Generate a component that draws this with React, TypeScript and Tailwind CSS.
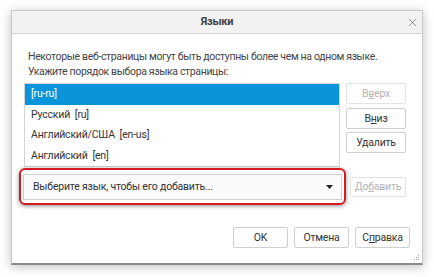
import { X } from 'lucide-react'

const rows = [
  { label: '[ru-ru]', selected: true },
  { label: 'Русский  [ru]', selected: false },
  { label: 'Английский/США  [en-us]', selected: false },
  { label: 'Английский  [en]', selected: false },
]

function Btn({ children, disabled, className = '' }: { children: React.ReactNode; disabled?: boolean; className?: string }) {
  return (
    <button
      className={`flex items-center justify-center border rounded-[2px] bg-white text-[10.5px] whitespace-nowrap ${
        disabled ? 'border-[#e3e3e3] text-[#b4b4b4]' : 'border-[#cfcfcf] text-[#333]'
      } ${className}`}
    >
      {children}
    </button>
  )
}

export default function App() {
  return (
    <div className="w-[434px] h-[277px] bg-white pt-[10px] pl-[11px] font-['Roboto',sans-serif] tracking-[-0.2px]">
      {/* Dialog */}
      <div className="w-[412px] h-[255px] bg-white border border-[#c8c8c8] border-b-[#8a8a8a] border-b-2 shadow-[0_2px_10px_rgba(0,0,0,0.25)] flex flex-col relative">
        {/* Title bar */}
        <div className="h-[23px] shrink-0 bg-[#f2f2f2] border-b border-[#d4d4d4] flex items-center justify-center relative">
          <span className="text-[11px] font-bold text-[#444]">Языки</span>
          <X className="absolute right-[3px] top-[5px] h-[13px] w-[13px] text-[#666]" strokeWidth={1.3} />
        </div>

        {/* Body */}
        <div className="flex flex-col px-[12px] pt-[15px]">
          <p className="text-[10.5px] leading-[15px] text-[#444] pl-[4px] whitespace-nowrap tracking-[-0.35px]">
            Некоторые веб-страницы могут быть доступны более чем на одном языке.
            <br />
            Укажите порядок выбора языка страницы:
          </p>

          <div className="flex mt-[4px] gap-[6px]">
            {/* List */}
            <div className="w-[316px] h-[84px] shrink-0 border border-[#d4d4d4] flex flex-col">
              {rows.map((r) => (
                <div
                  key={r.label}
                  className={`h-[20.5px] flex items-center pl-[6px] text-[10.5px] whitespace-pre ${
                    r.selected ? 'bg-[#0a95db] text-white' : 'text-[#333]'
                  }`}
                >
                  {r.label}
                </div>
              ))}
            </div>
            {/* Side buttons */}
            <div className="flex flex-col gap-[3px] w-[60px] shrink-0">
              <Btn disabled className="h-[21px]">
                В<span className="underline">в</span>ерх
              </Btn>
              <Btn className="h-[21px] mt-[1px]">
                В<span className="underline">н</span>из
              </Btn>
              <Btn className="h-[21px]">Удалить</Btn>
            </div>
          </div>

          {/* Add row */}
          <div className="flex items-center mt-[1px]">
            <div className="ml-[-5px] w-[327px] h-[37px] shrink-0 border-2 border-[#d01c22] rounded-[6px] shadow-[0_1px_4px_rgba(0,0,0,0.45)] p-[2px] flex items-center">
              <div className="flex-1 h-[26px] border border-[#cfcfcf] bg-[#fafafa] flex items-center justify-between pl-[9px] pr-[8px]">
                <span className="text-[10.5px] text-[#333]">Выберите язык, чтобы его добавить...</span>
                <svg width="7" height="4" viewBox="0 0 7 4">
                  <path d="M0 0 L7 0 L3.5 4 Z" fill="#222" />
                </svg>
              </div>
            </div>
            <Btn disabled className="h-[20px] w-[56px] ml-[4px] shrink-0">
              До<span className="underline">б</span>авить
            </Btn>
          </div>

          {/* Bottom buttons */}
          <div className="flex justify-end gap-[6px] mt-[22px]">
            <Btn className="w-[55px] h-[21px]">OK</Btn>
            <Btn className="w-[55px] h-[21px]">Отмена</Btn>
            <Btn className="w-[55px] h-[21px]">
              С<span className="underline">п</span>равка
            </Btn>
          </div>
        </div>

        {/* Resize grip */}
        <svg className="absolute right-[2px] bottom-[2px]" width="6" height="6" viewBox="0 0 6 6">
          <rect x="4" y="0" width="1" height="1" fill="#aaa" />
          <rect x="2" y="2" width="1" height="1" fill="#aaa" />
          <rect x="4" y="2" width="1" height="1" fill="#aaa" />
          <rect x="0" y="4" width="1" height="1" fill="#aaa" />
          <rect x="2" y="4" width="1" height="1" fill="#aaa" />
          <rect x="4" y="4" width="1" height="1" fill="#aaa" />
        </svg>
      </div>
    </div>
  )
}
